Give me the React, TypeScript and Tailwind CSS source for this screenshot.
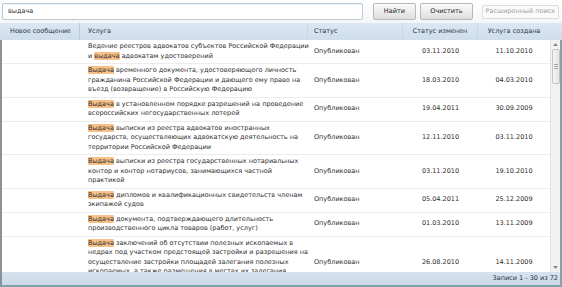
import React from 'react';

type Row = {
  lines: React.ReactNode[];
  changed: string;
  created: string;
};

const Hl: React.FC<{ children: React.ReactNode }> = ({ children }) => (
  <span className="bg-[#f9c08a] rounded-[1px]">{children}</span>
);

const rows: Row[] = [
  {
    lines: [
      'Ведение реестров адвокатов субъектов Российской Федерации',
      <>и <Hl>выдача</Hl> адвокатам удостоверений</>,
    ],
    changed: '03.11.2010',
    created: '11.10.2010',
  },
  {
    lines: [
      <><Hl>Выдача</Hl> временного документа, удостоверяющего личность</>,
      'гражданина Российской Федерации и дающего ему право на',
      'въезд (возвращение) в Российскую Федерацию',
    ],
    changed: '18.03.2010',
    created: '04.03.2010',
  },
  {
    lines: [
      <><Hl>Выдача</Hl> в установленном порядке разрешений на проведение</>,
      'всероссийских негосударственных лотерей',
    ],
    changed: '19.04.2011',
    created: '30.09.2009',
  },
  {
    lines: [
      <><Hl>Выдача</Hl> выписки из реестра адвокатов иностранных</>,
      'государств, осуществляющих адвокатскую деятельность на',
      'территории Российской Федерации',
    ],
    changed: '12.11.2010',
    created: '03.11.2010',
  },
  {
    lines: [
      <><Hl>Выдача</Hl> выписки из реестра государственных нотариальных</>,
      'контор и контор нотариусов, занимающихся частной',
      'практикой',
    ],
    changed: '03.11.2010',
    created: '19.10.2010',
  },
  {
    lines: [
      <><Hl>Выдача</Hl> дипломов и квалификационных свидетельств членам</>,
      'экипажей судов',
    ],
    changed: '05.04.2011',
    created: '25.12.2009',
  },
  {
    lines: [
      <><Hl>Выдача</Hl> документа, подтверждающего длительность</>,
      'производственного цикла товаров (работ, услуг)',
    ],
    changed: '01.03.2010',
    created: '13.11.2009',
  },
  {
    lines: [
      <><Hl>Выдача</Hl> заключений об отсутствии полезных ископаемых в</>,
      'недрах под участком предстоящей застройки и разрешения на',
      'осуществление застройки площадей залегания полезных',
      'ископаемых, а также размещения в местах их залегания',
      '\u00a0',
    ],
    changed: '26.08.2010',
    created: '14.11.2009',
  },
];

export default function App() {
  return (
    <div className="w-[562px] h-[287px] flex flex-col bg-white text-[#2e2e2e] text-[6.5px] leading-[9.5px] font-['DejaVu_Sans',sans-serif] overflow-hidden">
      {/* search bar */}
      <div className="h-[23px] flex items-center gap-[4px] pl-[2px] pr-[3px] bg-gradient-to-b from-white to-[#f3f5f7]">
        <div className="w-[364px] h-[17px] border border-[#b9c9d8] rounded-[2px] bg-white flex items-center px-[5px] shadow-[inset_0_1px_1px_rgba(0,0,0,0.06)]">
          <span>выдача</span>
        </div>
        <button className="ml-[6px] w-[44px] h-[17px] border border-[#b8b8b8] rounded-[2px] bg-gradient-to-b from-[#fbfbfb] to-[#dedede] text-[#222]">
          Найти
        </button>
        <button className="w-[53px] h-[17px] border border-[#b8b8b8] rounded-[2px] bg-gradient-to-b from-[#fbfbfb] to-[#dedede] text-[#222]">
          Очистить
        </button>
        <button className="ml-[5px] w-[78px] h-[14px] border border-[#dcdcdc] rounded-[2px] bg-[#fafafa] text-[#a0a0a0]">
          Расширенный поиск
        </button>
      </div>

      {/* header */}
      <div className="h-[17px] flex items-stretch bg-gradient-to-b from-[#dbe7f3] to-[#cfdeec] text-[#263646]">
        <div className="w-[80px] flex items-center pl-[10px] border-r border-[#b9cadb]">Новое сообщение</div>
        <div className="w-[228px] flex items-center pl-[8px] border-r border-[#c8d7e6]">Услуга</div>
        <div className="w-[95px] flex items-center pl-[6px] border-r border-[#c8d7e6]">Статус</div>
        <div className="w-[75px] flex items-center justify-center border-r border-[#c8d7e6]">Статус изменен</div>
        <div className="flex-1 flex items-center justify-center pr-[12px]">Услуга создана</div>
      </div>

      {/* body */}
      <div className="flex-1 min-h-0 flex flex-col border-l-2 border-r-2 border-b-2 border-l-[#8c9196] border-r-[#86a1a8] border-b-[#7fa3aa]">
        <div className="flex-1 min-h-0 flex">
          <div className="flex-1 min-w-0 overflow-hidden">
            {rows.map((r, i) => (
              <div key={i} className="flex items-center border-b border-[#ececec] py-[2px]">
                <div className="w-[78px] shrink-0" />
                <div className="w-[228px] shrink-0 pl-[8px] whitespace-nowrap">
                  {r.lines.map((l, j) => (
                    <div key={j}>{l}</div>
                  ))}
                </div>
                <div className="w-[95px] shrink-0 pl-[6px]">Опубликован</div>
                <div className="w-[75px] shrink-0 text-center">{r.changed}</div>
                <div className="flex-1 text-center">{r.created}</div>
              </div>
            ))}
          </div>
          {/* scrollbar */}
          <div className="w-[10px] shrink-0 bg-[#f1f1f1] border-l border-[#e2e2e2] flex flex-col items-center">
            <div className="h-[9px] flex items-center justify-center">
              <svg width="5" height="3" viewBox="0 0 5 3"><path d="M0 3 L2.5 0 L5 3 Z" fill="#8a8a8a" /></svg>
            </div>
            <div className="w-[8px] h-[35px] rounded-[2px] border border-[#c4c4c4] bg-gradient-to-r from-[#f6f6f6] to-[#e4e4e4] flex flex-col items-center justify-center gap-[1px]">
              <div className="w-[4px] h-[1px] bg-[#a8a8a8]" />
              <div className="w-[4px] h-[1px] bg-[#a8a8a8]" />
              <div className="w-[4px] h-[1px] bg-[#a8a8a8]" />
            </div>
            <div className="flex-1" />
            <div className="h-[10px] flex items-center justify-center">
              <svg width="5" height="3" viewBox="0 0 5 3"><path d="M0 0 L2.5 3 L5 0 Z" fill="#8a8a8a" /></svg>
            </div>
          </div>
        </div>
        {/* footer */}
        <div className="h-[13px] shrink-0 flex items-center justify-end pr-[2px] bg-gradient-to-b from-[#d6e3ef] to-[#cbdae8] text-[#263646]">
          Записи 1 - 30 из 72
        </div>
      </div>
    </div>
  );
}
